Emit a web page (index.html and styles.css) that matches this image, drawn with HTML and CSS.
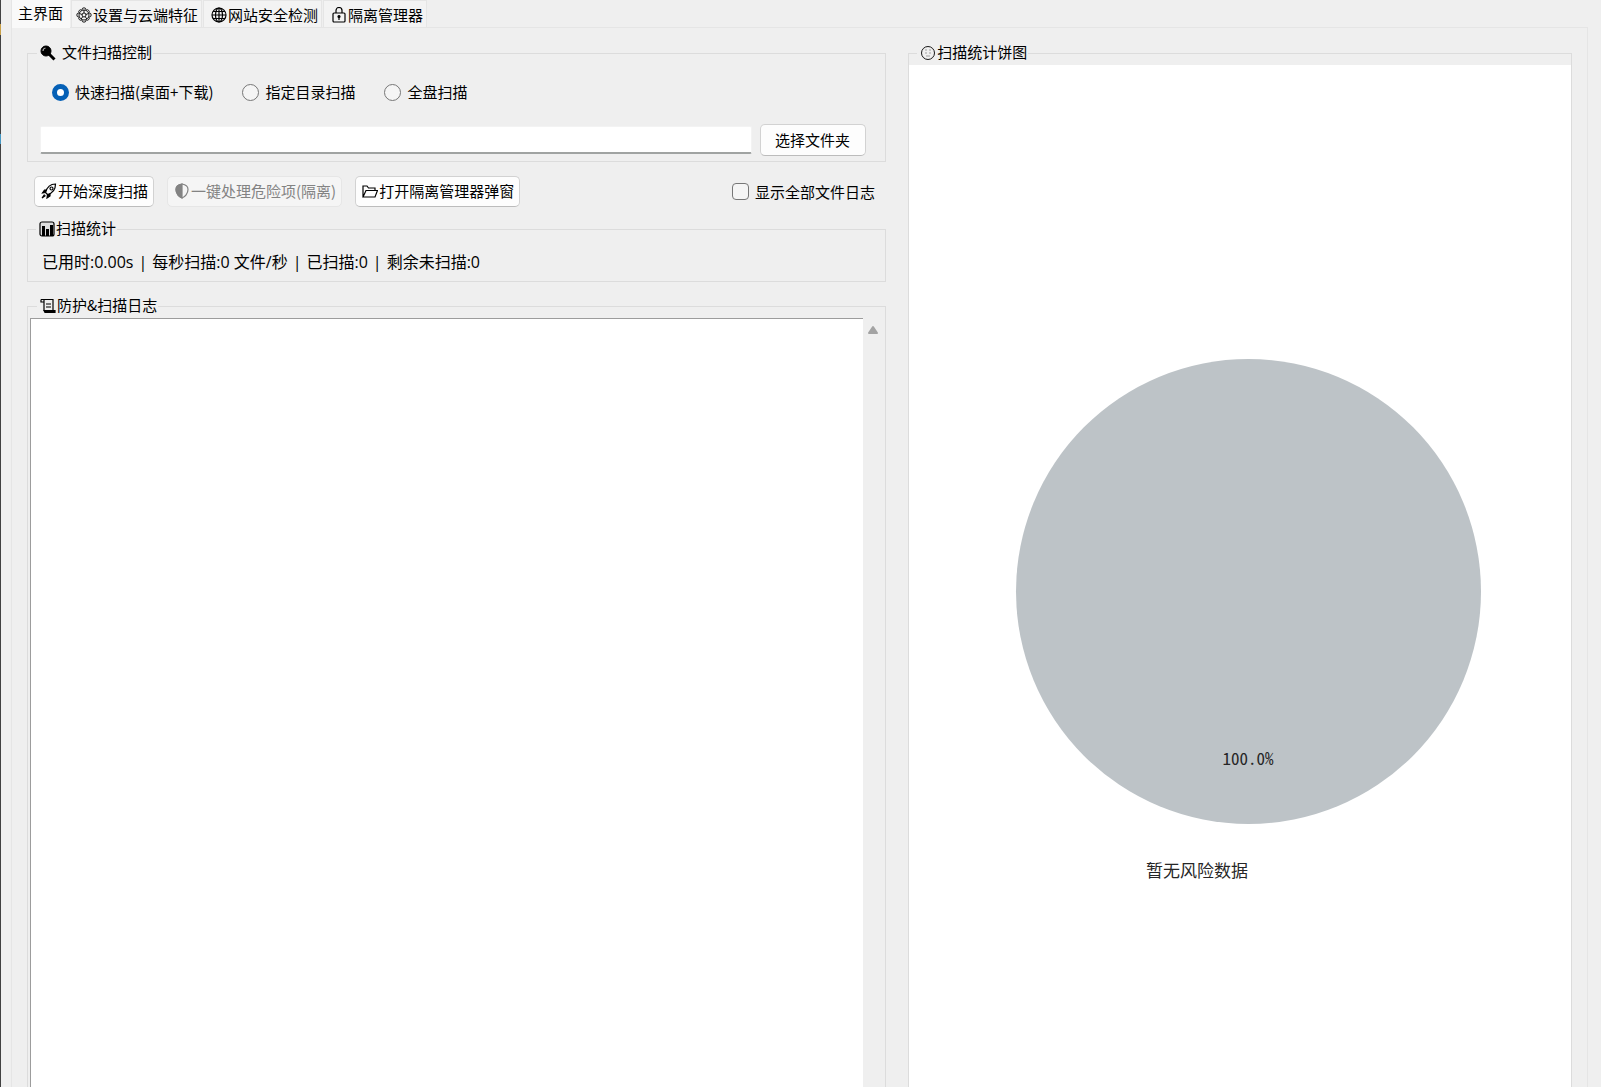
FILE: index.html
```html
<!DOCTYPE html>
<html lang="zh-CN">
  <head>
    <meta charset="utf-8">
    <title>主界面</title>
    <link rel="stylesheet" href="styles.css">
  </head>
  <body>
    <nav class="tabs">
      <button class="tab active" type="button">主界面</button>
      <button class="tab" type="button">
        <svg class="icon thin" viewBox="0 0 16 16"><circle cx="8" cy="8" r="5"/><circle cx="8" cy="8" r="2"/><path d="M6 2.800a2 2 0 0 1 4 0M10.300 3a2 2 0 0 1 2.700 2.700M13.200 6a2 2 0 0 1 0 4M13 10.300a2 2 0 0 1-2.700 2.700M10 13.200a2 2 0 0 1-4 0M5.700 13A2 2 0 0 1 3 10.300M2.800 10a2 2 0 0 1 0-4M3 5.700A2 2 0 0 1 5.700 3M8 3v3M12.500 6.500l-2.700 1M10.800 12l-1.600-2.400M5.200 12l1.600-2.400M3.500 6.500l2.700 1"/></svg><span>设置与云端特征</span>
      </button>
      <button class="tab" type="button">
        <svg class="icon" viewBox="0 0 16 16"><circle cx="8" cy="8" r="7"/><ellipse cx="8" cy="8" rx="3.5" ry="7"/><path d="M8 1v14M1 8h14M2 4.5h12M2 11.5h12"/></svg><span>网站安全检测</span>
      </button>
      <button class="tab" type="button">
        <svg class="icon" viewBox="0 0 16 16"><rect x="2" y="6" width="12" height="9" rx="1"/><path d="M5 6V3.5a3 3 0 0 1 6 0V6M8 10v3"/><circle cx="8" cy="9.5" r="1" fill="currentColor"/></svg><span>隔离管理器</span>
      </button>
    </nav>

    <main class="page">
      <div class="left-pane">
        <fieldset class="group">
          <legend class="spaced">
            <svg class="icon" viewBox="0 0 16 16"><path d="M9 9l5.500 5.500" stroke-width="3"/><circle cx="6" cy="6" r="5" fill="currentColor" stroke-width="1"/><path d="M3 6a3 3 0 0 1 2.500-3" stroke="#aaa"/></svg><span>文件扫描控制</span>
          </legend>
          <div class="scan-modes">
            <label><input type="radio" name="mode" checked>快速扫描(桌面+下载)</label>
            <label><input type="radio" name="mode">指定目录扫描</label>
            <label><input type="radio" name="mode">全盘扫描</label>
          </div>
          <div class="path-row">
            <input class="path" type="text" aria-label="选择文件夹">
            <button class="btn browse" type="button">选择文件夹</button>
          </div>
        </fieldset>

        <div class="actions">
          <button class="btn" type="button">
            <svg class="icon" viewBox="0 0 16 16"><path d="M4.500 9.500C6 4 9.500 1 14.500 1c0 5-2.500 9-8 10.500z"/><circle cx="10.500" cy="5.500" r="1.500"/><path d="M5.500 7H3.500L1.500 10l3-.5M9 10.500V13l-3 2 .5-3.500" fill="currentColor"/><path d="M3.500 11.500l-2.500 3.500 3.500-2.500"/></svg><span>开始深度扫描</span>
          </button>
          <button class="btn" type="button" disabled>
            <svg class="icon" viewBox="0 0 16 16"><path d="M8 1c3 .5 6 2 6 5.500 0 4-3 7.500-6 8.500-3-1-6-4.500-6-8.500C2 3 5 1.500 8 1z"/><path d="M8 1v14c-3-1-6-4.500-6-8.500C2 3 5 1.500 8 1z" fill="currentColor"/></svg><span>一键处理危险项(隔离)</span>
          </button>
          <button class="btn" type="button">
            <svg class="icon" viewBox="0 0 16 16"><path d="M1 14V3h4l1.500 2H13v2.500M1 14l3-6.500h11.500L13 14z"/></svg><span>打开隔离管理器弹窗</span>
          </button>
          <label class="show-all"><input type="checkbox">显示全部文件日志</label>
        </div>

        <fieldset class="group stats">
          <legend>
            <svg class="icon" viewBox="0 0 16 16"><rect x="1" y="1" width="14" height="14" rx="2" fill="#ddd"/><path d="M4.500 5v10M8.500 8v7M12.500 4v11" stroke-width="3"/></svg><span>扫描统计</span>
          </legend>
          <p class="stats-text">
            <span>已用时:0.00s</span><span>|</span><span>每秒扫描:0 文件/秒</span><span>|</span><span>已扫描:0</span><span>|</span><span>剩余未扫描:0</span>
          </p>
        </fieldset>

        <fieldset class="group log-group">
          <legend>
            <svg class="icon" viewBox="0 0 16 16"><path d="M1 1.500h12v11M4 1.500v11M1 1.500v2.500h3M6 6h5M6 9h5"/><path d="M4 12.500h11v2H5z" fill="currentColor"/></svg><span>防护&amp;扫描日志</span>
          </legend>
          <div class="log-row">
            <textarea class="log" aria-label="防护&amp;扫描日志" readonly></textarea>
            <div class="scrollbar">
              <svg class="arrow" viewBox="0 0 12 10"><path d="M6 2l4 6H2z"/></svg>
            </div>
          </div>
        </fieldset>
      </div>

      <fieldset class="group chart-group">
        <legend>
          <svg class="icon thin" viewBox="0 0 16 16"><circle cx="8" cy="8" r="6.500"/><path d="M5 5h2M9 5h2M5 8h2M9 8h2M6 11h4" stroke="#999"/></svg><span>扫描统计饼图</span>
        </legend>
        <figure class="chart">
          <div class="pie"><span>100.0%</span></div>
          <figcaption>暂无风险数据</figcaption>
        </figure>
      </fieldset>
    </main>
  </body>
</html>
```
FILE: styles.css
```css
* {
  box-sizing: border-box;
}
body {
  margin: 0;
  height: 100vh;
  overflow: hidden;
  display: flex;
  flex-direction: column;
  padding: 0 13px 0 11px;
  background: #efefef linear-gradient(#414141 24px, #c9a048 24px, #c9a048 35px, #414141 35px, #414141 134px, #4698c4 134px, #4698c4 144px, #414141 144px) 0 0 / 1px 100% no-repeat;
  color: #000;
  font-family: "Noto Sans CJK SC", sans-serif;
  font-size: 15px;
  line-height: 20px;
}
button, input, textarea {
  font: inherit;
  color: inherit;
  margin: 0;
}
.icon {
  width: 16px;
  height: 16px;
  flex: none;
  fill: none;
  stroke: currentColor;
  stroke-width: 1.2;
}
.icon.thin {
  stroke-width: 0.9;
}

/* tabs */
.tabs {
  display: flex;
  flex: none;
  height: 27px;
  gap: 1px;
}
.tab {
  display: flex;
  align-items: center;
  gap: 1px;
  padding: 2px 3px 0 7px;
  border: 1px solid #e5e5e5;
  border-bottom: none;
  background: #f3f3f3;
  white-space: nowrap;
}
.tab.active {
  height: 28px;
  padding: 0 7px 3px 6px;
  border-top: none;
  border-right: none;
  background: #f9f9f9;
  z-index: 1;
}
.tab.active + .tab {
  padding-left: 4px;
}
.page {
  flex: 1;
  min-height: 0;
  display: grid;
  grid-template-columns: 22fr 17fr;
  gap: 22px;
  padding: 15px 15px 0;
  border: 1px solid #e5e5e5;
  border-bottom: none;
}
.left-pane {
  display: flex;
  flex-direction: column;
  min-width: 0;
  min-height: 0;
}

/* group boxes */
.group {
  margin: 0;
  min-width: 0;
  padding: 19px 19px 5px 12px;
  border: 1px solid #dcdcdc;
}
legend {
  display: flex;
  align-items: center;
  gap: 1px;
  height: 20px;
  margin-left: 8px;
  padding: 0 1px 0 3px;
  white-space: nowrap;
}
legend span {
  margin-top: -2px;
}
.group > .spaced {
  gap: 6px;
  margin-left: -3px;
}
.scan-modes {
  display: flex;
  gap: 29px;
  padding-left: 12px;
}
label {
  display: flex;
  align-items: center;
  gap: 6px;
  white-space: nowrap;
}
input[type="radio"],
input[type="checkbox"] {
  appearance: none;
  width: 17px;
  height: 17px;
  border: 1px solid #777;
  border-radius: 50%;
  background: #f5f5f5;
}
input[type="radio"]:checked {
  border: 5px solid #0560b6;
  background: #fff;
}
input[type="checkbox"] {
  border-radius: 4px;
}
.path-row {
  display: flex;
  align-items: center;
  gap: 8px;
  margin-top: 22px;
}
.path {
  flex: 1;
  min-width: 0;
  height: 28px;
  padding: 0 6px;
  border: 1px solid #f3f3f3;
  border-bottom: 2px solid #a0a3a2;
  border-radius: 2px;
  background: #fff;
}
.btn {
  display: flex;
  align-items: center;
  justify-content: center;
  gap: 1px;
  height: 31px;
  padding: 0 5px 1px 6px;
  border: 1px solid #d2d2d2;
  border-bottom-color: #bcbcbc;
  border-radius: 5px;
  background: #fdfdfd;
  white-space: nowrap;
}
.btn:disabled {
  border-color: #e6e6e6;
  background: #f5f5f5;
  color: #838383;
}
.btn.browse {
  height: 32px;
  padding: 0 15px 1px 14px;
}
.actions {
  display: flex;
  align-items: center;
  gap: 13px;
  margin-top: 14px;
  padding: 0 11px 0 7px;
}
.show-all {
  margin-left: auto;
}
.stats {
  margin-top: 12px;
  padding: 11px 14px 7px;
}
.stats > legend {
  margin-left: -6px;
}
.stats-text {
  display: flex;
  gap: 5px;
  margin: 0;
  font-family: "Open Sans", "Noto Sans CJK SC", sans-serif;
  font-size: 16px;
  line-height: 24px;
  white-space: nowrap;
}
.log-group {
  flex: 1;
  min-height: 0;
  margin-top: 14px;
  padding: 2px 2px 0;
  border-bottom: none;
}
.log-group > legend {
  margin-left: 7px;
}
.log-row {
  display: flex;
  gap: 2px;
  height: 100%;
}
.log {
  flex: 1;
  min-width: 0;
  padding: 4px;
  border: solid #9c9c9c;
  border-width: 1px 0 0 1px;
  background: #fff;
  resize: none;
  outline: none;
}
.scrollbar {
  width: 18px;
}
.arrow {
  display: block;
  width: 12px;
  height: 10px;
  margin: 7px 0 0 2px;
  fill: #a3a3a3;
  stroke: #a3a3a3;
  stroke-width: 2;
  stroke-linejoin: round;
}

/* pie chart */
.chart-group {
  min-height: 0;
  padding: 2px 0 0;
  border-bottom: none;
}
.chart {
  display: flex;
  flex-direction: column;
  align-items: center;
  height: 100%;
  margin: 0;
  padding: 294px 0 0 16px;
  background: #fff;
  color: #262626;
  font-size: 17px;
}
.pie {
  display: flex;
  align-items: flex-end;
  justify-content: center;
  width: 72%;
  aspect-ratio: 1;
  padding-bottom: 56px;
  border-radius: 50%;
  background: #bdc3c7;
}
.pie span {
  font-feature-settings: "hwid";
}
.chart figcaption {
  width: 72%;
  margin-top: 36px;
  padding-right: 36%;
  text-align: right;
  white-space: nowrap;
}
```
